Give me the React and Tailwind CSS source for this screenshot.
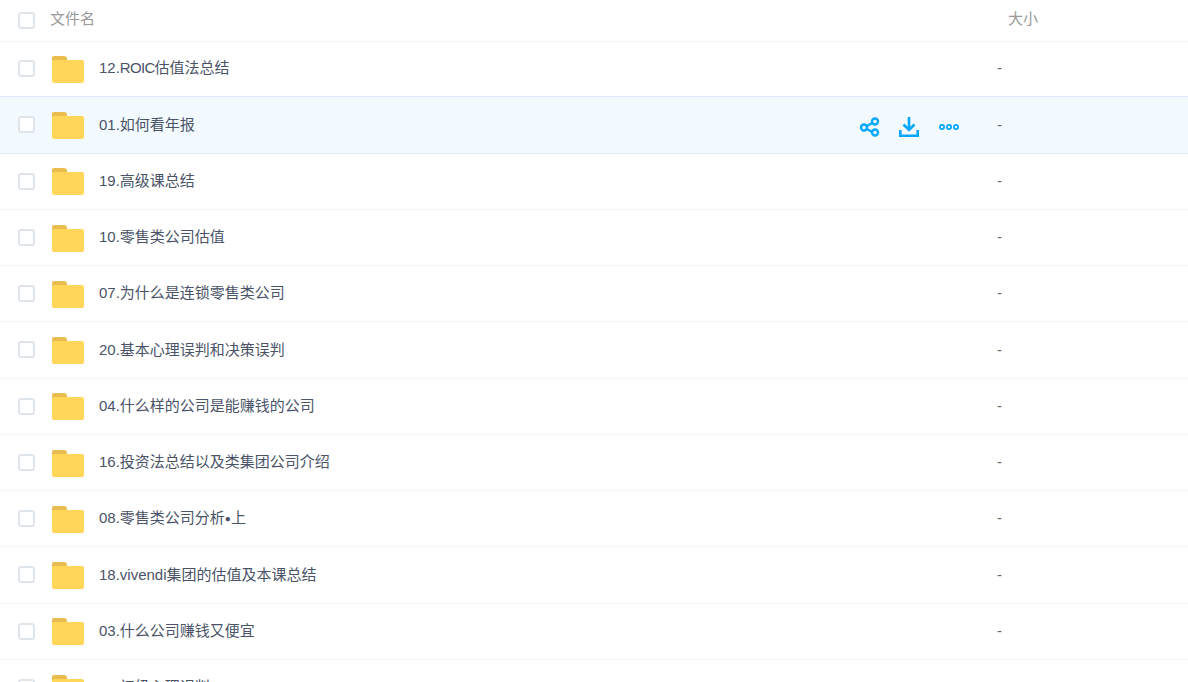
import React from 'react';

const files = [
    <>12.<span className="tracking-[-0.7px]">ROIC</span>估值法总结</>,
    '01.如何看年报',
    '19.高级课总结',
    '10.零售类公司估值',
    '07.为什么是连锁零售类公司',
    '20.基本心理误判和决策误判',
    '04.什么样的公司是能赚钱的公司',
    '16.投资法总结以及类集团公司介绍',
    <>08.零售类公司分析<span className="text-[10px] align-[1px]">●</span>上</>,
    '18.vivendi集团的估值及本课总结',
    '03.什么公司赚钱又便宜',
    '05.初级心理误判',
];

const Checkbox = () => (
    <span className="block w-[17px] h-[17px] shrink-0 rounded-[3px] border-2 border-[#e0e5ec] bg-white" />
);

const FolderIcon = () => (
    <svg width="32" height="27" viewBox="0 0 32 27" className="block shrink-0">
        <path d="M0 2a2 2 0 0 1 2-2h10a3 3 0 0 1 3 3v2H0z" fill="#e9bc4f" />
        <path d="M0 6a2 2 0 0 1 2-2h28a2 2 0 0 1 2 2v19a2 2 0 0 1-2 2H2a2 2 0 0 1-2-2z" fill="#ffd659" />
    </svg>
);

const ShareIcon = () => (
    <svg width="20" height="20" viewBox="0 0 20 20" fill="none" stroke="#06a7ff" strokeWidth="2.400">
        <circle cx="4" cy="10.500" r="3" />
        <circle cx="15" cy="4.500" r="3" />
        <circle cx="15" cy="15.500" r="3" />
        <path d="M6.800 9l5.500-3M6.800 12l5.500 3" />
    </svg>
);

const DownloadIcon = () => (
    <svg width="20" height="20" viewBox="0 0 20 20" fill="none" stroke="#06a7ff" strokeWidth="2.600">
        <path d="M10 0v12.500M4.500 7.500l5.500 5.500 5.500-5.500" />
        <path d="M1.300 13v5.700h17.400V13" />
    </svg>
);

const MoreIcon = () => (
    <svg width="20" height="20" viewBox="0 0 20 20" fill="none" stroke="#06a7ff" strokeWidth="1.800" className="ml-px">
        <circle cx="3" cy="10" r="2.100" />
        <circle cx="10" cy="10" r="2.100" />
        <circle cx="17" cy="10" r="2.100" />
    </svg>
);

const App = () => {
    return (
        <div className="w-[1188px] h-[682px] overflow-hidden bg-white font-['Liberation_Sans','Noto_Sans_CJK_SC',sans-serif] text-[15px]">
            <div className="flex items-center h-[42px] border-b border-[#f4f5f7] pl-[18px] text-[#999]">
                <Checkbox />
                <span className="ml-[15px] w-[958px] -translate-y-px">文件名</span>
                <span className="-translate-y-px">大小</span>
            </div>
            <div className="-mt-[0.9px]">
                {files.map((name, i) => (
                    <div
                        key={i}
                        className={`flex items-center h-[56.25px] border-b pl-[18px] text-[#4a5368] ${i === 1 ? 'bg-[#f3faff] border-[#dceafb]' : i === 0 ? 'border-[#dceafb]' : 'border-[#f4f5f7]'}`}
                    >
                        <Checkbox />
                        <span className="ml-[17px] mt-[1.2px]"><FolderIcon /></span>
                        <span className="ml-[15px] w-[761px] shrink-0">{name}</span>
                        <div className="w-[137px] flex items-center gap-[19px] shrink-0 mt-[4px]">
                            {i === 1 && (
                                <>
                                    <ShareIcon />
                                    <DownloadIcon />
                                    <MoreIcon />
                                </>
                            )}
                        </div>
                        <span className="text-[#666]">-</span>
                    </div>
                ))}
            </div>
        </div>
    );
};

export default App;
